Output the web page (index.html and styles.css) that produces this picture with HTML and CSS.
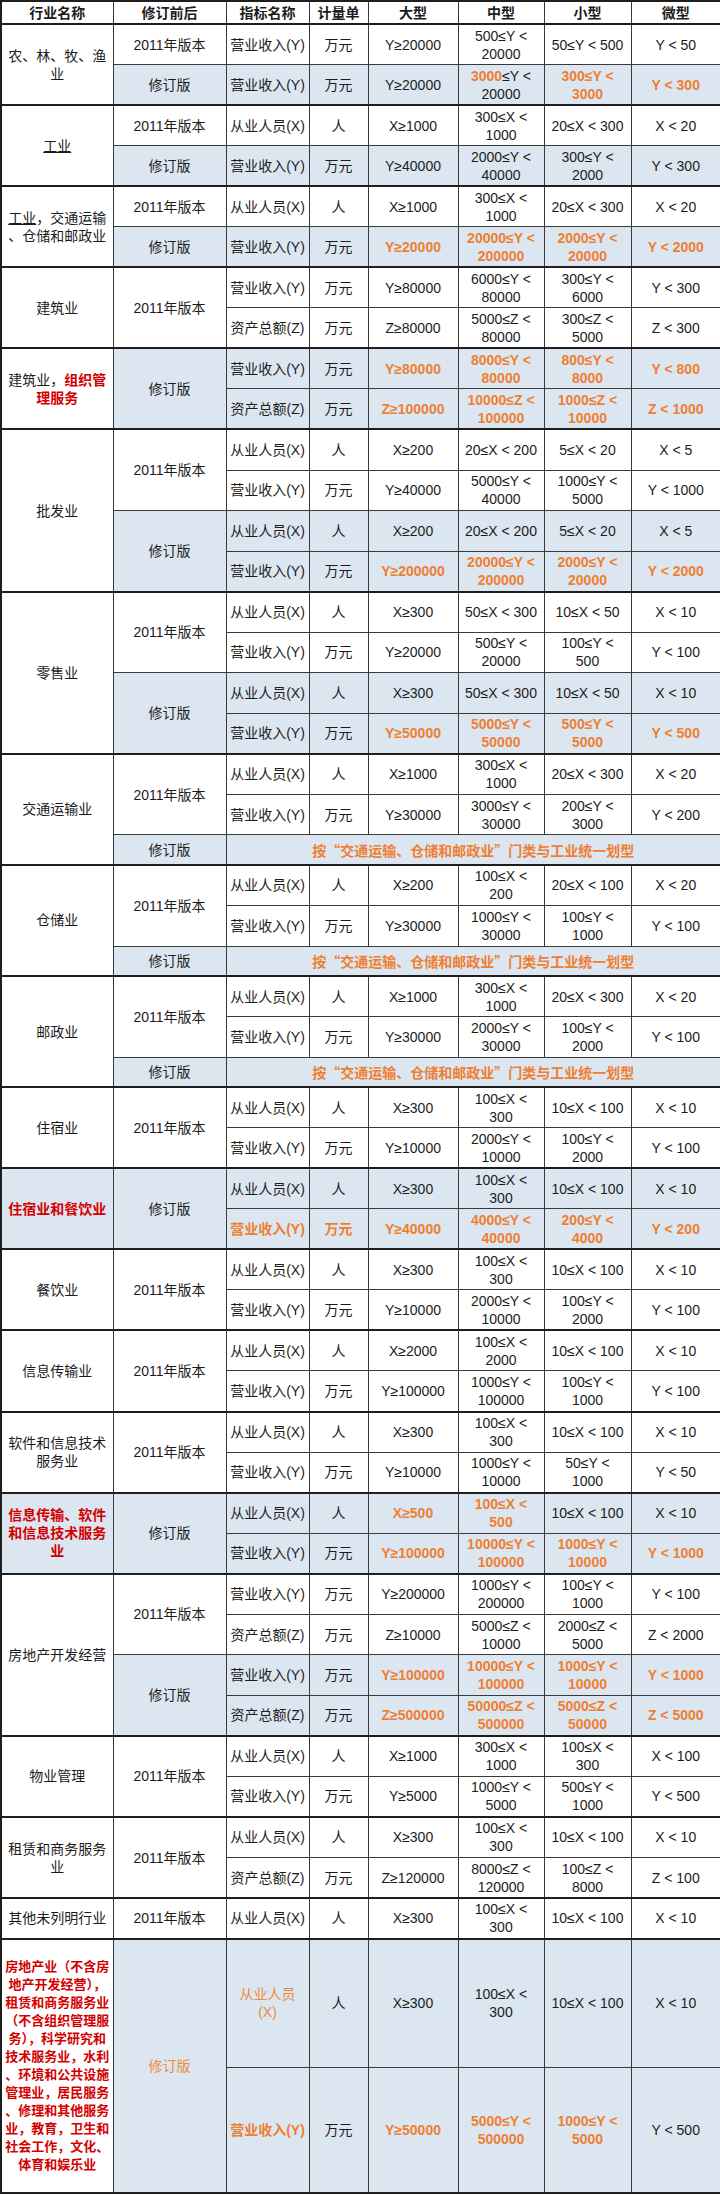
FILE: index.html
```html
<!DOCTYPE html>
<html lang="zh-CN">
<head>
<meta charset="utf-8">
<title>中小微企业划型标准对照</title>
<link rel="stylesheet" href="styles.css">
</head>
<body>
<table class="t">
<colgroup><col class="c1"><col class="c2"><col class="c3"><col class="c4"><col class="c5"><col class="c6"><col class="c7"><col class="c8"></colgroup>
<thead>
<tr class="h"><th>行业名称</th><th>修订前后</th><th>指标名称</th><th>计量单</th><th>大型</th><th>中型</th><th>小型</th><th>微型</th></tr>
</thead>
<tbody>
<tr class="r k"><td rowspan="2" class="ind">农、林、牧、渔<br>业</td><td>2011年版本</td><td>营业收入(Y)</td><td>万元</td><td>Y≥20000</td><td>500≤Y &lt;<br>20000</td><td>50≤Y &lt; 500</td><td>Y &lt; 50</td></tr>
<tr class="r b"><td>修订版</td><td>营业收入(Y)</td><td>万元</td><td>Y≥20000</td><td><span class="o">3000</span>≤Y &lt;<br>20000</td><td class="o">300≤Y &lt;<br>3000</td><td class="o">Y &lt; 300</td></tr>

<tr class="r k"><td rowspan="2" class="ind"><span class="u">工业</span></td><td>2011年版本</td><td>从业人员(X)</td><td>人</td><td>X≥1000</td><td>300≤X &lt;<br>1000</td><td>20≤X &lt; 300</td><td>X &lt; 20</td></tr>
<tr class="r b"><td>修订版</td><td>营业收入(Y)</td><td>万元</td><td>Y≥40000</td><td>2000≤Y &lt;<br>40000</td><td>300≤Y &lt;<br>2000</td><td>Y &lt; 300</td></tr>

<tr class="r k"><td rowspan="2" class="ind"><span class="u">工业</span>，交通运输<br>、仓储和邮政业</td><td>2011年版本</td><td>从业人员(X)</td><td>人</td><td>X≥1000</td><td>300≤X &lt;<br>1000</td><td>20≤X &lt; 300</td><td>X &lt; 20</td></tr>
<tr class="r b"><td>修订版</td><td>营业收入(Y)</td><td>万元</td><td class="o">Y≥20000</td><td class="o">20000≤Y &lt;<br>200000</td><td class="o">2000≤Y &lt;<br>20000</td><td class="o">Y &lt; 2000</td></tr>

<tr class="r k"><td rowspan="2" class="ind">建筑业</td><td rowspan="2">2011年版本</td><td>营业收入(Y)</td><td>万元</td><td>Y≥80000</td><td>6000≤Y &lt;<br>80000</td><td>300≤Y &lt;<br>6000</td><td>Y &lt; 300</td></tr>
<tr class="r"><td>资产总额(Z)</td><td>万元</td><td>Z≥80000</td><td>5000≤Z &lt;<br>80000</td><td>300≤Z &lt;<br>5000</td><td>Z &lt; 300</td></tr>

<tr class="r b k"><td rowspan="2" class="ind w">建筑业，<span class="red">组织管<br>理服务</span></td><td rowspan="2">修订版</td><td>营业收入(Y)</td><td>万元</td><td class="o">Y≥80000</td><td class="o">8000≤Y &lt;<br>80000</td><td class="o">800≤Y &lt;<br>8000</td><td class="o">Y &lt; 800</td></tr>
<tr class="r b"><td>资产总额(Z)</td><td>万元</td><td class="o">Z≥100000</td><td class="o">10000≤Z &lt;<br>100000</td><td class="o">1000≤Z &lt;<br>10000</td><td class="o">Z &lt; 1000</td></tr>

<tr class="r k"><td rowspan="4" class="ind">批发业</td><td rowspan="2">2011年版本</td><td>从业人员(X)</td><td>人</td><td>X≥200</td><td>20≤X &lt; 200</td><td>5≤X &lt; 20</td><td>X &lt; 5</td></tr>
<tr class="r"><td>营业收入(Y)</td><td>万元</td><td>Y≥40000</td><td>5000≤Y &lt;<br>40000</td><td>1000≤Y &lt;<br>5000</td><td>Y &lt; 1000</td></tr>
<tr class="r b"><td rowspan="2">修订版</td><td>从业人员(X)</td><td>人</td><td>X≥200</td><td>20≤X &lt; 200</td><td>5≤X &lt; 20</td><td>X &lt; 5</td></tr>
<tr class="r b"><td>营业收入(Y)</td><td>万元</td><td class="o">Y≥200000</td><td class="o">20000≤Y &lt;<br>200000</td><td class="o">2000≤Y &lt;<br>20000</td><td class="o">Y &lt; 2000</td></tr>

<tr class="r k"><td rowspan="4" class="ind">零售业</td><td rowspan="2">2011年版本</td><td>从业人员(X)</td><td>人</td><td>X≥300</td><td>50≤X &lt; 300</td><td>10≤X &lt; 50</td><td>X &lt; 10</td></tr>
<tr class="r"><td>营业收入(Y)</td><td>万元</td><td>Y≥20000</td><td>500≤Y &lt;<br>20000</td><td>100≤Y &lt;<br>500</td><td>Y &lt; 100</td></tr>
<tr class="r b"><td rowspan="2">修订版</td><td>从业人员(X)</td><td>人</td><td>X≥300</td><td>50≤X &lt; 300</td><td>10≤X &lt; 50</td><td>X &lt; 10</td></tr>
<tr class="r b"><td>营业收入(Y)</td><td>万元</td><td class="o">Y≥50000</td><td class="o">5000≤Y &lt;<br>50000</td><td class="o">500≤Y &lt;<br>5000</td><td class="o">Y &lt; 500</td></tr>

<tr class="r k"><td rowspan="3" class="ind">交通运输业</td><td rowspan="2">2011年版本</td><td>从业人员(X)</td><td>人</td><td>X≥1000</td><td>300≤X &lt;<br>1000</td><td>20≤X &lt; 300</td><td>X &lt; 20</td></tr>
<tr class="r"><td>营业收入(Y)</td><td>万元</td><td>Y≥30000</td><td>3000≤Y &lt;<br>30000</td><td>200≤Y &lt;<br>3000</td><td>Y &lt; 200</td></tr>
<tr class="s b"><td>修订版</td><td colspan="6" class="o cjk">按“交通运输、仓储和邮政业”门类与工业统一划型</td></tr>

<tr class="r k"><td rowspan="3" class="ind">仓储业</td><td rowspan="2">2011年版本</td><td>从业人员(X)</td><td>人</td><td>X≥200</td><td>100≤X &lt;<br>200</td><td>20≤X &lt; 100</td><td>X &lt; 20</td></tr>
<tr class="r"><td>营业收入(Y)</td><td>万元</td><td>Y≥30000</td><td>1000≤Y &lt;<br>30000</td><td>100≤Y &lt;<br>1000</td><td>Y &lt; 100</td></tr>
<tr class="s b"><td>修订版</td><td colspan="6" class="o cjk">按“交通运输、仓储和邮政业”门类与工业统一划型</td></tr>

<tr class="r k"><td rowspan="3" class="ind">邮政业</td><td rowspan="2">2011年版本</td><td>从业人员(X)</td><td>人</td><td>X≥1000</td><td>300≤X &lt;<br>1000</td><td>20≤X &lt; 300</td><td>X &lt; 20</td></tr>
<tr class="r"><td>营业收入(Y)</td><td>万元</td><td>Y≥30000</td><td>2000≤Y &lt;<br>30000</td><td>100≤Y &lt;<br>2000</td><td>Y &lt; 100</td></tr>
<tr class="s b"><td>修订版</td><td colspan="6" class="o cjk">按“交通运输、仓储和邮政业”门类与工业统一划型</td></tr>

<tr class="r k"><td rowspan="2" class="ind">住宿业</td><td rowspan="2">2011年版本</td><td>从业人员(X)</td><td>人</td><td>X≥300</td><td>100≤X &lt;<br>300</td><td>10≤X &lt; 100</td><td>X &lt; 10</td></tr>
<tr class="r"><td>营业收入(Y)</td><td>万元</td><td>Y≥10000</td><td>2000≤Y &lt;<br>10000</td><td>100≤Y &lt;<br>2000</td><td>Y &lt; 100</td></tr>

<tr class="r b k"><td rowspan="2" class="ind red">住宿业和餐饮业</td><td rowspan="2">修订版</td><td>从业人员(X)</td><td>人</td><td>X≥300</td><td>100≤X &lt;<br>300</td><td>10≤X &lt; 100</td><td>X &lt; 10</td></tr>
<tr class="r b"><td class="o">营业收入(Y)</td><td class="o">万元</td><td class="o">Y≥40000</td><td class="o">4000≤Y &lt;<br>40000</td><td class="o">200≤Y &lt;<br>4000</td><td class="o">Y &lt; 200</td></tr>

<tr class="r k"><td rowspan="2" class="ind">餐饮业</td><td rowspan="2">2011年版本</td><td>从业人员(X)</td><td>人</td><td>X≥300</td><td>100≤X &lt;<br>300</td><td>10≤X &lt; 100</td><td>X &lt; 10</td></tr>
<tr class="r"><td>营业收入(Y)</td><td>万元</td><td>Y≥10000</td><td>2000≤Y &lt;<br>10000</td><td>100≤Y &lt;<br>2000</td><td>Y &lt; 100</td></tr>

<tr class="r k"><td rowspan="2" class="ind">信息传输业</td><td rowspan="2">2011年版本</td><td>从业人员(X)</td><td>人</td><td>X≥2000</td><td>100≤X &lt;<br>2000</td><td>10≤X &lt; 100</td><td>X &lt; 10</td></tr>
<tr class="r"><td>营业收入(Y)</td><td>万元</td><td>Y≥100000</td><td>1000≤Y &lt;<br>100000</td><td>100≤Y &lt;<br>1000</td><td>Y &lt; 100</td></tr>

<tr class="r k"><td rowspan="2" class="ind">软件和信息技术<br>服务业</td><td rowspan="2">2011年版本</td><td>从业人员(X)</td><td>人</td><td>X≥300</td><td>100≤X &lt;<br>300</td><td>10≤X &lt; 100</td><td>X &lt; 10</td></tr>
<tr class="r"><td>营业收入(Y)</td><td>万元</td><td>Y≥10000</td><td>1000≤Y &lt;<br>10000</td><td>50≤Y &lt;<br>1000</td><td>Y &lt; 50</td></tr>

<tr class="r b k"><td rowspan="2" class="ind red">信息传输、软件<br>和信息技术服务<br>业</td><td rowspan="2">修订版</td><td>从业人员(X)</td><td>人</td><td class="o">X≥500</td><td class="o">100≤X &lt;<br>500</td><td>10≤X &lt; 100</td><td>X &lt; 10</td></tr>
<tr class="r b"><td>营业收入(Y)</td><td>万元</td><td class="o">Y≥100000</td><td class="o">10000≤Y &lt;<br>100000</td><td class="o">1000≤Y &lt;<br>10000</td><td class="o">Y &lt; 1000</td></tr>

<tr class="r k"><td rowspan="4" class="ind">房地产开发经营</td><td rowspan="2">2011年版本</td><td>营业收入(Y)</td><td>万元</td><td>Y≥200000</td><td>1000≤Y &lt;<br>200000</td><td>100≤Y &lt;<br>1000</td><td>Y &lt; 100</td></tr>
<tr class="r"><td>资产总额(Z)</td><td>万元</td><td>Z≥10000</td><td>5000≤Z &lt;<br>10000</td><td>2000≤Z &lt;<br>5000</td><td>Z &lt; 2000</td></tr>
<tr class="r b"><td rowspan="2">修订版</td><td>营业收入(Y)</td><td>万元</td><td class="o">Y≥100000</td><td class="o">10000≤Y &lt;<br>100000</td><td class="o">1000≤Y &lt;<br>10000</td><td class="o">Y &lt; 1000</td></tr>
<tr class="r b"><td>资产总额(Z)</td><td>万元</td><td class="o">Z≥500000</td><td class="o">50000≤Z &lt;<br>500000</td><td class="o">5000≤Z &lt;<br>50000</td><td class="o">Z &lt; 5000</td></tr>

<tr class="r k"><td rowspan="2" class="ind">物业管理</td><td rowspan="2">2011年版本</td><td>从业人员(X)</td><td>人</td><td>X≥1000</td><td>300≤X &lt;<br>1000</td><td>100≤X &lt;<br>300</td><td>X &lt; 100</td></tr>
<tr class="r"><td>营业收入(Y)</td><td>万元</td><td>Y≥5000</td><td>1000≤Y &lt;<br>5000</td><td>500≤Y &lt;<br>1000</td><td>Y &lt; 500</td></tr>

<tr class="r k"><td rowspan="2" class="ind">租赁和商务服务<br>业</td><td rowspan="2">2011年版本</td><td>从业人员(X)</td><td>人</td><td>X≥300</td><td>100≤X &lt;<br>300</td><td>10≤X &lt; 100</td><td>X &lt; 10</td></tr>
<tr class="r"><td>资产总额(Z)</td><td>万元</td><td>Z≥120000</td><td>8000≤Z &lt;<br>120000</td><td>100≤Z &lt;<br>8000</td><td>Z &lt; 100</td></tr>

<tr class="r k"><td class="ind">其他未列明行业</td><td>2011年版本</td><td>从业人员(X)</td><td>人</td><td>X≥300</td><td>100≤X &lt;<br>300</td><td>10≤X &lt; 100</td><td>X &lt; 10</td></tr>

<tr class="f1 b k"><td rowspan="2" class="fin red w">房地产业（不含房<br>地产开发经营），<br>租赁和商务服务业<br>（不含组织管理服<br>务），科学研究和<br>技术服务业，水利<br>、环境和公共设施<br>管理业，居民服务<br>、修理和其他服务<br>业，教育，卫生和<br>社会工作，文化、<br>体育和娱乐业</td><td rowspan="2" class="o2">修订版</td><td class="o2">从业人员<br>(X)</td><td>人</td><td>X≥300</td><td>100≤X &lt;<br>300</td><td>10≤X &lt; 100</td><td>X &lt; 10</td></tr>
<tr class="f2 b"><td class="o">营业收入(Y)</td><td>万元</td><td class="o">Y≥50000</td><td class="o">5000≤Y &lt;<br>500000</td><td class="o">1000≤Y &lt;<br>5000</td><td>Y &lt; 500</td></tr>
</tbody>
</table>
</body>
</html>
```

FILE: styles.css
```css
html, body {
  margin: 0;
  padding: 0;
  background: #ffffff;
}

body {
  width: 720px;
}

.t {
  width: 720px;
  border-collapse: collapse;
  table-layout: fixed;
  border: 2px solid #1e1e1e;
  font-family: "Liberation Sans", "Noto Sans CJK SC", sans-serif;
  font-size: 14px;
  color: #1c1c1c;
}

.t th,
.t td {
  border: 1px solid #3a3a3a;
  text-align: center;
  vertical-align: middle;
  padding: 0 2px;
  line-height: 18px;
  white-space: nowrap;
}

.t th {
  font-weight: bold;
  font-size: 14px;
  line-height: 18px;
}

.c1 { width: 112px; }
.c2 { width: 113px; }
.c3 { width: 83px; }
.c4 { width: 59px; }
.c5 { width: 90px; }
.c6 { width: 86px; }
.c7 { width: 87px; }
.c8 { width: 90px; }

tr.h { height: 23px; }
tr.r { height: 40.56px; }
tr.s { height: 30px; }
tr.f1 { height: 129px; }
tr.f2 { height: 125px; }

tr.k > td,
tr.k > th {
  border-top: 2px solid #1e1e1e;
}

tr.b {
  background: #dce6f1;
}

td.w {
  background: #ffffff;
}

.o {
  color: #ee7f32;
  font-weight: bold;
}

.o2 {
  color: #ef8a3e;
}

.cjk {
  font-family: "Noto Sans CJK SC", sans-serif;
}

.red {
  color: #d40000;
  font-weight: bold;
}

.u {
  text-decoration: underline;
}

.ind {
  line-height: 21px;
}

.fin {
  font-size: 13px;
  line-height: 20px;
  padding: 0;
}
```
